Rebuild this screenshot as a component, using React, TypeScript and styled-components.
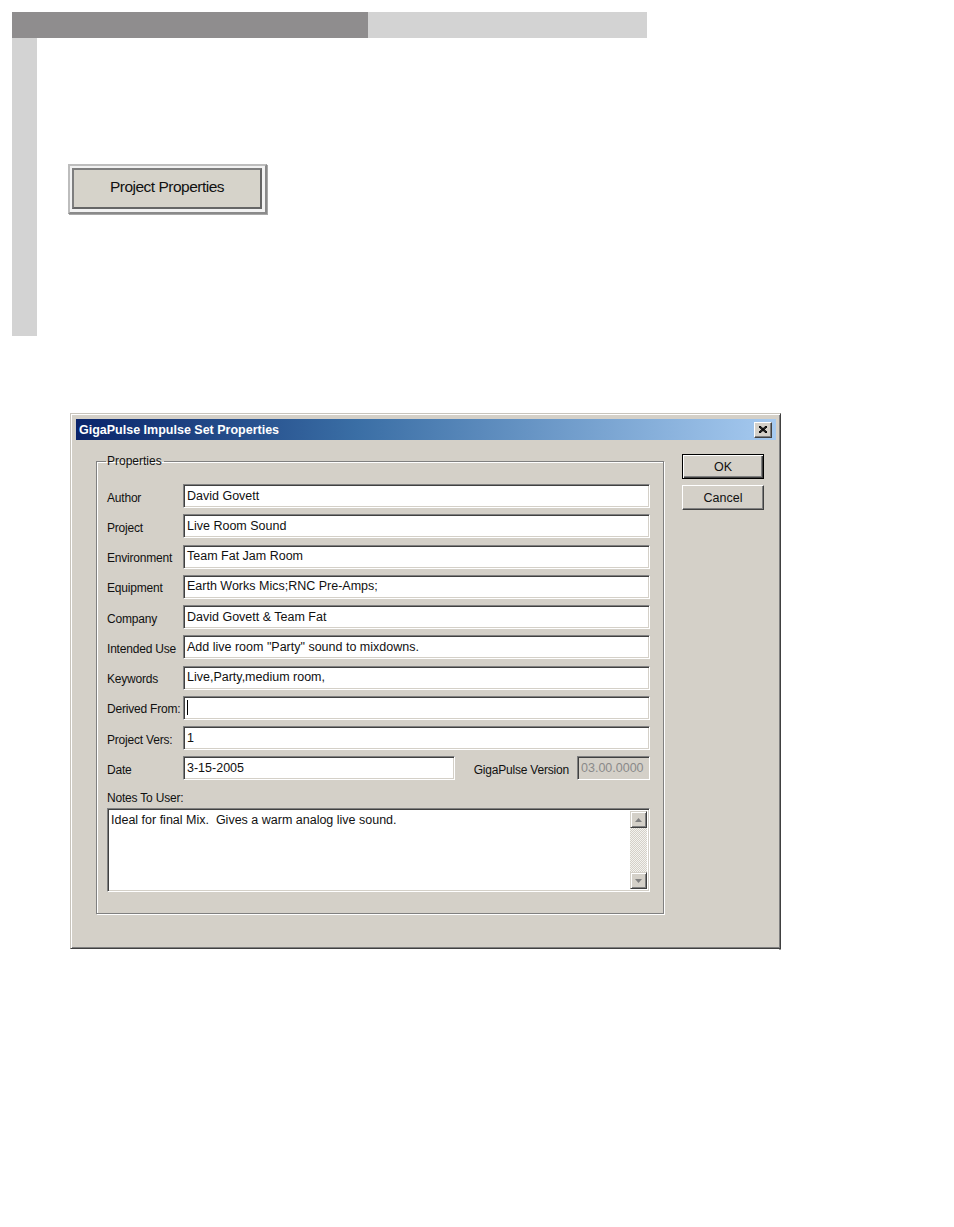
import React from "react";
import styled, { createGlobalStyle } from "styled-components";

const Global = createGlobalStyle`
  html, body { margin: 0; padding: 0; background: #ffffff; }
  body { font-family: "Liberation Sans", Arial, sans-serif; }
`;

const Page = styled.div`
  display: flex;
  flex-direction: column;
  align-items: flex-start;
  padding: 12px 0 0 12px;
  width: 954px;
  min-height: 1227px;
  box-sizing: border-box;
`;

const TopBar = styled.div`
  display: flex;
  width: 635px;
  height: 26px;
`;

const BarSegment = styled.div<{ $tone: "dark" | "light"; $w?: number }>`
  background: ${(p) => (p.$tone === "dark" ? "#8f8d8e" : "#d3d3d3")};
  ${(p) => (p.$w ? `width: ${p.$w}px;` : "flex: 1;")}
`;

const UpperSection = styled.div`
  display: flex;
  align-items: flex-start;
`;

const SideStrip = styled.div`
  width: 25px;
  height: 298px;
  background: #d3d3d3;
`;

const ButtonArea = styled.div`
  padding: 126px 0 0 31px;
`;

const BigButtonFrame = styled.div`
  width: 199px;
  height: 50px;
  box-sizing: border-box;
  border: 2px solid;
  border-color: #bdbdbd #8a8a8a #8a8a8a #bdbdbd;
  background: #f2f2f2;
  padding: 2px 3px 3px 2px;
  display: flex;
  box-shadow: 1px 1px 0 #a8a8a8;
`;

const BigButtonFace = styled.div`
  flex: 1;
  border: 2px solid;
  border-color: #7e7e7e #666 #666 #7e7e7e;
  background: #d6d3ca;
  display: flex;
  align-items: center;
  justify-content: center;
  font-size: 15.5px;
  color: #111;
  letter-spacing: -0.5px;
  padding-bottom: 3px;
  box-sizing: border-box;
`;

const Dialog = styled.div`
  margin: 77px 0 0 58px;
  width: 711px;
  height: 536px;
  box-sizing: border-box;
  background: #d4d0c8;
  border: 1px solid;
  border-color: #c8c4bc #404040 #404040 #c8c4bc;
  box-shadow: inset 1px 1px #ffffff, inset -1px -1px #808080, -2px 1px 0 #ffffff, 0 1px 0 #9a9a9a;
  padding: 5px 4px 4px 5px;
  display: flex;
  flex-direction: column;
`;

const TitleBar = styled.div`
  height: 21px;
  display: flex;
  align-items: center;
  justify-content: space-between;
  background: linear-gradient(90deg, #0a246a 0%, #3a6ea5 40%, #a6caf0 100%);
  padding: 0 4px 0 3px;
`;

const TitleText = styled.span`
  color: #ffffff;
  font-weight: bold;
  font-size: 12.5px;
  letter-spacing: 0px;
`;

const CloseButton = styled.div`
  width: 18px;
  height: 16px;
  box-sizing: border-box;
  background: #d4d0c8;
  border: 1px solid;
  border-color: #ffffff #404040 #404040 #ffffff;
  box-shadow: inset -1px -1px #808080;
  display: flex;
  align-items: center;
  justify-content: center;
`;

const DialogBody = styled.div`
  display: flex;
  align-items: flex-start;
  padding: 14px 0 0 20px;
`;

const GroupBox = styled.fieldset`
  margin: 0;
  width: 567px;
  height: 460px;
  box-sizing: border-box;
  border: 1px solid #808080;
  box-shadow: inset 1px 1px #ffffff, 1px 1px 0 #ffffff;
  padding: 16px 13px 0 10px;
  display: flex;
  flex-direction: column;
`;

const GroupLegend = styled.legend`
  font-size: 12px;
  color: #111;
  margin-left: -1px;
  padding: 0 2px 0 1px;
  line-height: 14px;
`;

const FormGrid = styled.div`
  display: grid;
  grid-template-columns: 76px 1fr;
  grid-auto-rows: 24px;
  row-gap: 6.25px;
  align-items: center;
`;

const Label = styled.span`
  font-size: 12px;
  color: #111;
  white-space: nowrap;
  padding-top: 3px;
  letter-spacing: -0.2px;
`;

const Field = styled.div<{ $w?: number; $disabled?: boolean }>`
  height: 24px;
  box-sizing: border-box;
  ${(p) => (p.$w ? `width: ${p.$w}px;` : "")}
  border: 1px solid;
  border-color: #808080 #ffffff #ffffff #808080;
  box-shadow: inset 1px 1px #404040, inset -1px -1px #d4d0c8;
  background: ${(p) => (p.$disabled ? "#d4d0c8" : "#ffffff")};
  color: ${(p) => (p.$disabled ? "#8a8a8a" : "#111")};
  font-size: 12.5px;
  line-height: 22px;
  padding: 0 3px 1px 3px;
  white-space: nowrap;
  overflow: hidden;
  display: flex;
  align-items: center;
`;

const Caret = styled.span`
  display: inline-block;
  width: 1px;
  height: 15px;
  background: #000;
`;

const DateRow = styled.div`
  display: flex;
  align-items: center;
`;

const VersionLabel = styled(Label)`
  margin-left: auto;
  margin-right: 8px;
`;

const NotesLabel = styled(Label)`
  display: block;
  margin-top: 8px;
  line-height: 14px;
`;

const NotesBox = styled.div`
  margin-top: 3px;
  width: 543px;
  height: 84px;
  box-sizing: border-box;
  border: 1px solid;
  border-color: #808080 #ffffff #ffffff #808080;
  box-shadow: inset 1px 1px #404040, inset -1px -1px #d4d0c8;
  background: #ffffff;
  display: flex;
  padding: 2px 2px 2px 2px;
`;

const NotesText = styled.div`
  flex: 1;
  font-size: 12.5px;
  color: #111;
  padding: 2px 0 0 1px;
  line-height: 14px;
`;

const ScrollBar = styled.div`
  width: 17px;
  display: flex;
  flex-direction: column;
`;

const ScrollArrow = styled.div`
  width: 17px;
  height: 17px;
  box-sizing: border-box;
  background: #d4d0c8;
  border: 1px solid;
  border-color: #d4d0c8 #404040 #404040 #d4d0c8;
  box-shadow: inset 1px 1px #ffffff, inset -1px -1px #808080;
  display: flex;
  align-items: center;
  justify-content: center;
`;

const ScrollTrack = styled.div`
  flex: 1;
  background: repeating-conic-gradient(#d4d0c8 0 25%, #f4f3ef 0 50%) 0 0 / 2px 2px;
`;

const ButtonColumn = styled.div`
  display: flex;
  flex-direction: column;
  gap: 6px;
  margin-left: 18px;
`;

const PushButton = styled.div<{ $default?: boolean }>`
  width: 82px;
  height: 25px;
  box-sizing: border-box;
  background: #d4d0c8;
  font-size: 12.5px;
  color: #111;
  display: flex;
  align-items: center;
  justify-content: center;
  border: 1px solid;
  border-color: ${(p) => (p.$default ? "#000" : "#ffffff #404040 #404040 #ffffff")};
  box-shadow: ${(p) =>
    p.$default
      ? "inset 1px 1px #ffffff, inset -1px -1px #404040, inset -2px -2px #808080"
      : "inset -1px -1px #808080"};
`;

const fields: { label: string; value: string }[] = [
  { label: "Author", value: "David Govett" },
  { label: "Project", value: "Live Room Sound" },
  { label: "Environment", value: "Team Fat Jam Room" },
  { label: "Equipment", value: "Earth Works Mics;RNC Pre-Amps;" },
  { label: "Company", value: "David Govett & Team Fat" },
  { label: "Intended Use", value: "Add live room \"Party\" sound to mixdowns." },
  { label: "Keywords", value: "Live,Party,medium room," },
  { label: "Derived From:", value: "" },
  { label: "Project Vers:", value: "1" },
];

const CloseIcon = () => (
  <svg width="8" height="7" viewBox="0 0 8 7">
    <path d="M0 0 L8 7 M1 0 L8 6 M0 1 L7 7 M8 0 L0 7 M7 0 L0 6 M8 1 L1 7" stroke="#000" strokeWidth="1" />
  </svg>
);

const Arrow = ({ up }: { up: boolean }) => (
  <svg width="7" height="4" viewBox="0 0 7 4">
    <polygon points={up ? "3.5,0 7,4 0,4" : "0,0 7,0 3.5,4"} fill="#808080" />
  </svg>
);

export default function App() {
  return (
    <>
      <Global />
      <Page>
        <TopBar>
          <BarSegment $tone="dark" $w={356} />
          <BarSegment $tone="light" />
        </TopBar>
        <UpperSection>
          <SideStrip />
          <ButtonArea>
            <BigButtonFrame>
              <BigButtonFace>Project Properties</BigButtonFace>
            </BigButtonFrame>
          </ButtonArea>
        </UpperSection>

        <Dialog>
          <TitleBar>
            <TitleText>GigaPulse Impulse Set Properties</TitleText>
            <CloseButton>
              <CloseIcon />
            </CloseButton>
          </TitleBar>
          <DialogBody>
            <GroupBox>
              <GroupLegend>Properties</GroupLegend>
              <FormGrid>
                {fields.map((f) => (
                  <React.Fragment key={f.label}>
                    <Label>{f.label}</Label>
                    <Field>{f.label === "Derived From:" ? <Caret /> : f.value}</Field>
                  </React.Fragment>
                ))}
                <Label>Date</Label>
                <DateRow>
                  <Field $w={272}>3-15-2005</Field>
                  <VersionLabel>GigaPulse Version</VersionLabel>
                  <Field $w={73} $disabled>
                    03.00.0000
                  </Field>
                </DateRow>
              </FormGrid>
              <NotesLabel>Notes To User:</NotesLabel>
              <NotesBox>
                <NotesText>Ideal for final Mix.&nbsp; Gives a warm analog live sound.</NotesText>
                <ScrollBar>
                  <ScrollArrow>
                    <Arrow up />
                  </ScrollArrow>
                  <ScrollTrack />
                  <ScrollArrow>
                    <Arrow up={false} />
                  </ScrollArrow>
                </ScrollBar>
              </NotesBox>
            </GroupBox>
            <ButtonColumn>
              <PushButton $default>OK</PushButton>
              <PushButton>Cancel</PushButton>
            </ButtonColumn>
          </DialogBody>
        </Dialog>
      </Page>
    </>
  );
}
